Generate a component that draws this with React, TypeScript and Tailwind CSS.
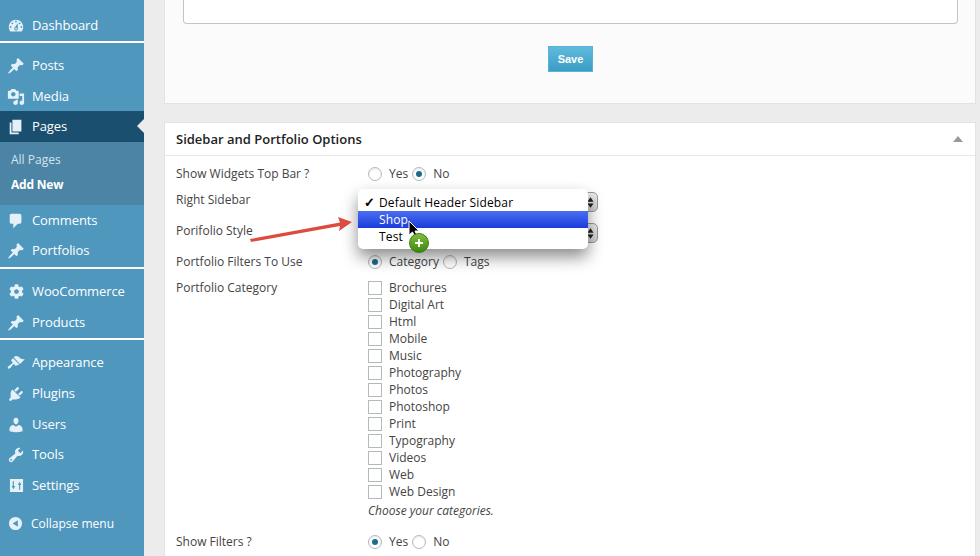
import { ReactNode } from "react"
import { FaCog } from "react-icons/fa"

const icons = {
  dashboard:
    "M3.76 16h12.48c1.1-1.37 1.76-3.11 1.76-5 0-4.42-3.58-8-8-8s-8 3.58-8 8c0 1.89.66 3.63 1.76 5zM10 4c.55 0 1 .45 1 1s-.45 1-1 1-1-.45-1-1 .45-1 1-1zM6 6c.55 0 1 .45 1 1s-.45 1-1 1-1-.45-1-1 .45-1 1-1zm8 0c.55 0 1 .45 1 1s-.45 1-1 1-1-.45-1-1 .45-1 1-1zm-5.37 5.55L12 7v6c0 1.1-.9 2-2 2s-2-.9-2-2c0-.57.24-1.08.63-1.45zM4 10c.55 0 1 .45 1 1s-.45 1-1 1-1-.45-1-1 .45-1 1-1zm12 0c.55 0 1 .45 1 1s-.45 1-1 1-1-.45-1-1 .45-1 1-1zm-5 3c0-.55-.45-1-1-1s-1 .45-1 1 .45 1 1 1 1-.45 1-1z",
  pin: "M10.44 3.02l1.82-1.82 6.36 6.35-1.83 1.82c-1.05-.68-2.48-.57-3.41.36l-.75.75c-.92.93-1.04 2.35-.35 3.41l-1.83 1.82-2.41-2.41-2.8 2.79c-.42.42-3.38 2.71-3.8 2.29s1.86-3.39 2.28-3.81l2.79-2.79L4.1 9.36l1.83-1.82c1.05.69 2.48.57 3.4-.36l.75-.75c.93-.92 1.05-2.35.36-3.41z",
  media:
    "M13 11V4c0-.55-.45-1-1-1h-1.67L9 1H5L3.67 3H2c-.55 0-1 .45-1 1v7c0 .55.45 1 1 1h10c.55 0 1-.45 1-1zM7 4.5c1.38 0 2.5 1.12 2.5 2.5S8.38 9.5 7 9.5 4.5 8.38 4.5 7 5.62 4.5 7 4.5zM14 6h5v10.5c0 1.38-1.12 2.5-2.5 2.5S14 17.88 14 16.5s1.12-2.5 2.5-2.5c.17 0 .34.02.5.05V9h-3V6zm-4 8.05V13h2v3.5c0 1.38-1.12 2.5-2.5 2.5S7 17.88 7 16.5 8.12 14 9.5 14c.17 0 .34.02.5.05z",
  pages: "M6 15V2h10v13H6zm-1 1h8v2H3V5h2v11z",
  comment: "M5 2h9c1.1 0 2 .9 2 2v7c0 1.1-.9 2-2 2h-2l-5 5v-5H5c-1.1 0-2-.9-2-2V4c0-1.1.9-2 2-2z",
  brush:
    "M14.48 11.06L7.41 3.99l1.5-1.5c.5-.56 2.3-.47 3.51.32 1.21.8 1.43 1.28 2.91 2.1 1.18.64 2.45 1.26 4.45.85zm-.71.71L6.7 4.7 4.93 6.47c-.39.39-.39 1.02 0 1.41l1.06 1.06c.39.39.39 1.03 0 1.42-.6.6-1.43 1.11-2.21 1.69-.35.26-.7.53-1.01.84C1.43 13.23.4 14.85 1.02 15.98c.5.8 2.2-.08 3.14-.98.3-.31.58-.66.84-1.01.58-.78 1.09-1.61 1.69-2.21.39-.39 1.02-.39 1.41 0l1.06 1.06c.39.39 1.02.39 1.41 0z",
  plug: "M13.11 4.36L9.87 7.6 8 5.73l3.24-3.24c.35-.34 1.05-.2 1.56.32.52.51.66 1.21.31 1.55zm-8 1.77l.91-1.12 9.01 9.01-1.19.84c-.71.71-2.63 1.16-3.82 1.16H6.14L4.9 17.26c-.59.59-1.54.59-2.12 0-.59-.58-.59-1.53 0-2.12l1.24-1.24v-3.88c0-1.13.4-3.19 1.09-3.89zm7.26 3.97l3.24-3.24c.34-.35 1.04-.21 1.55.31.52.51.66 1.21.31 1.55l-3.24 3.25z",
  user: "M10 9.25c-2.27 0-2.73-3.44-2.73-3.44C7 4.02 7.82 2 9.97 2c2.16 0 2.98 2.02 2.71 3.81 0 0-.41 3.44-2.68 3.44zm0 2.57L12.72 10c2.39 0 4.52 2.33 4.52 4.53v2.49s-3.65 1.13-7.24 1.13c-3.65 0-7.24-1.13-7.24-1.13v-2.49c0-2.25 1.94-4.48 4.47-4.48z",
  wrench:
    "M16.68 9.77c-1.34 1.34-3.3 1.67-4.95.99l-5.41 6.52c-.99.99-2.59.99-3.58 0s-.99-2.59 0-3.57l6.52-5.42c-.68-1.65-.35-3.61.99-4.95 1.28-1.28 3.12-1.62 4.72-1.06l-2.89 2.89 2.82 2.82 2.86-2.87c.53 1.58.18 3.39-1.08 4.67zM3.81 16.21c.4.39 1.04.39 1.43 0 .4-.4.4-1.04 0-1.43-.39-.4-1.03-.4-1.43 0-.39.39-.39 1.03 0 1.43z",
}

function Dash({ d }: { d: string }) {
  return (
    <svg viewBox="0 0 20 20" className="h-[18px] w-[18px]" fill="currentColor">
      <path d={d} />
    </svg>
  )
}

function SlidersIcon() {
  return (
    <svg viewBox="0 0 16 16" className="h-[15px] w-[15px]" fill="currentColor">
      <path fillRule="evenodd" d="M1 1h14v14H1zM4 3.5v5H2.8L4.7 12l1.9-3.5H5.2v-5zM10.8 12.5v-5H9.4l1.9-3.5 1.9 3.5H12v5z" />
    </svg>
  )
}

function MenuItem({ icon, label, active }: { icon: ReactNode; label: string; active?: boolean }) {
  return (
    <div className={`relative flex h-[31px] items-center text-[13px] tracking-[-0.1px] text-white ${active ? "bg-[#1b4f70]" : ""}`}>
      <span className="flex w-[32px] shrink-0 justify-center text-[#e4f1f8]">{icon}</span>
      <span>{label}</span>
      {active && (
        <span className="absolute right-0 top-[8px] border-y-[7px] border-r-[7px] border-y-transparent border-r-[#ececec]" />
      )}
    </div>
  )
}

function Sidebar() {
  return (
    <aside className="w-[144px] shrink-0 bg-[#5097be] pt-[10px]">
      <MenuItem icon={<Dash d={icons.dashboard} />} label="Dashboard" />
      <div className="mb-[7px] h-[2px] bg-white" />
      <MenuItem icon={<Dash d={icons.pin} />} label="Posts" />
      <MenuItem icon={<Dash d={icons.media} />} label="Media" />
      <div className="-mt-[1px]">
        <MenuItem icon={<Dash d={icons.pages} />} label="Pages" active />
      </div>
      <div className="flex h-[63px] flex-col bg-[#4b84a4] pl-[11px] pt-[5px] text-[12px]">
        <span className="flex h-[25px] items-center text-[#d3e4ee]">All Pages</span>
        <span className="flex h-[25px] items-center font-bold tracking-[-0.2px] text-white">Add New</span>
      </div>
      <MenuItem icon={<Dash d={icons.comment} />} label="Comments" />
      <div className="-mt-[1px]">
        <MenuItem icon={<Dash d={icons.pin} />} label="Portfolios" />
      </div>
      <div className="mb-[7px] mt-[1px] h-[2px] bg-white" />
      <MenuItem icon={<FaCog size={15} />} label="WooCommerce" />
      <MenuItem icon={<Dash d={icons.pin} />} label="Products" />
      <div className="mb-[7px] h-[2px] bg-white" />
      <MenuItem icon={<Dash d={icons.brush} />} label="Appearance" />
      <MenuItem icon={<Dash d={icons.plug} />} label="Plugins" />
      <MenuItem icon={<Dash d={icons.user} />} label="Users" />
      <div className="-mt-[1px]">
        <MenuItem icon={<Dash d={icons.wrench} />} label="Tools" />
      </div>
      <MenuItem icon={<SlidersIcon />} label="Settings" />
      <div className="mt-[7px] flex h-[31px] items-center text-[12px] text-white">
        <span className="flex w-[31px] shrink-0 justify-center text-[#e4f1f8]">
          <svg viewBox="0 0 16 16" className="h-[15px] w-[15px]" fill="currentColor">
            <path fillRule="evenodd" d="M8 1a7 7 0 1 1 0 14A7 7 0 0 1 8 1zM10.5 4.5L5 8l5.500 3.500z" />
          </svg>
        </span>
        <span>Collapse menu</span>
      </div>
    </aside>
  )
}

function Radio({ checked }: { checked?: boolean }) {
  return (
    <span className="flex h-[14px] w-[14px] shrink-0 items-center justify-center rounded-full border border-[#b4b9be] bg-white shadow-[inset_0_1px_2px_rgba(0,0,0,0.1)]">
      {checked && <span className="h-[6px] w-[6px] rounded-full bg-[#1e6a8d]" />}
    </span>
  )
}

function RadioPair({ first, second, checked }: { first: string; second: string; checked: 0 | 1 }) {
  return (
    <div className="flex items-center">
      <Radio checked={checked === 0} />
      <span className="ml-[7px] mr-[4px]">{first}</span>
      <Radio checked={checked === 1} />
      <span className="ml-[7px]">{second}</span>
    </div>
  )
}

function Row({ label, height, children }: { label: string; height: string; children?: ReactNode }) {
  return (
    <div className={`flex ${height}`}>
      <div className="w-[192px] shrink-0">{label}</div>
      <div>{children}</div>
    </div>
  )
}

function FakeSelect() {
  return (
    <div className="mt-[1px] flex h-[20px] w-[230px] items-center justify-end rounded-[5px] border border-[#9a9a9a] bg-gradient-to-b from-[#ececec] to-[#cfcfcf] pr-[3px]">
      <svg viewBox="0 0 8 14" className="h-[13px] w-[7px]" fill="#222">
        <path d="M4 1l3.500 5H.5zM4 13L.5 8h7z" />
      </svg>
    </div>
  )
}

const categories = [
  "Brochures",
  "Digital Art",
  "Html",
  "Mobile",
  "Music",
  "Photography",
  "Photos",
  "Photoshop",
  "Print",
  "Typography",
  "Videos",
  "Web",
  "Web Design",
]

function Dropdown() {
  return (
    <div className="absolute left-[193px] top-[66px] h-[60px] w-[230px] rounded-[5px] bg-white pt-[5px] text-[12px] tracking-[0.15px] text-black shadow-[0_8px_16px_rgba(0,0,0,0.45)]">
      <div className="flex h-[17px] items-center pl-[6px]">
        <span className="w-[15px] text-[13px] font-bold leading-none">✓</span>
        <span>Default Header Sidebar</span>
      </div>
      <div className="flex h-[17px] items-center bg-gradient-to-b from-[#4a6df0] to-[#1c3bdc] pl-[21px] text-white">Shop</div>
      <div className="flex h-[17px] items-center pl-[21px]">Test</div>
    </div>
  )
}

function Overlays() {
  return (
    <>
      <svg viewBox="245 212 112 34" className="absolute left-[80px] top-[89px] h-[34px] w-[112px]">
        <path d="M250 239L340 222.500 338 217 352 222 339 231 340 226 251 242z" fill="#dd4b3e" />
      </svg>
      <svg viewBox="0 0 14 20" className="absolute left-[243px] top-[97px] h-[20px] w-[14px]">
        <path d="M1 1v14l3.500-3 2.500 5 2.400-1-2.400-5H11z" fill="#000" stroke="#fff" strokeWidth="1" />
      </svg>
      <span className="absolute left-[244px] top-[110px] flex h-[20px] w-[20px] items-center justify-center rounded-full border border-[#3f7a14] bg-gradient-to-b from-[#7dc03a] to-[#3f8613]">
        <svg viewBox="0 0 10 10" className="h-[10px] w-[10px]" fill="#fff">
          <path d="M4 1h2v3h3v2H6v3H4V6H1V4h3z" />
        </svg>
      </span>
    </>
  )
}

export default function App() {
  return (
    <div className="flex h-[556px] w-[980px] overflow-hidden font-['Open_Sans',sans-serif]">
      <Sidebar />
      <main className="flex-1 bg-[#ececec] pl-[20px] pr-[4px]">
        <section className="h-[104px] border border-t-0 border-[#e3e3e3] bg-[#fbfbfb] pl-[18px] pr-[17px]">
          <div className="h-[24px] rounded-b-[4px] border border-t-0 border-[#c4c4c4] bg-white" />
          <div className="mt-[22px] flex justify-center">
            <button className="h-[26px] w-[45px] border border-[#58b3d6] bg-gradient-to-b from-[#5fbbdc] to-[#3b9cc4] font-['Liberation_Sans',sans-serif] text-[11px] font-bold text-white">
              Save
            </button>
          </div>
        </section>
        <section className="relative mt-[18px] h-[500px] border border-[#e3e3e3] bg-white text-[12px] text-[#444]">
          <header className="flex h-[33px] items-center justify-between border-b border-[#e8e8e8] pl-[11px] pr-[12px]">
            <h2 className="pt-[1px] text-[13px] font-semibold text-[#222]">Sidebar and Portfolio Options</h2>
            <span className="border-x-[5px] border-b-[6px] border-x-transparent border-b-[#999]" />
          </header>
          <div className="pl-[11px] pt-[9px] leading-[17px]">
            <Row label="Show Widgets Top Bar ?" height="h-[26px]">
              <RadioPair first="Yes" second="No" checked={1} />
            </Row>
            <Row label="Right Sidebar" height="h-[31px]">
              <FakeSelect />
            </Row>
            <Row label="Porifolio Style" height="h-[31px]">
              <FakeSelect />
            </Row>
            <Row label="Portfolio Filters To Use" height="h-[26px]">
              <RadioPair first="Category" second="Tags" checked={0} />
            </Row>
            <Row label="Portfolio Category" height="h-[254px]">
              <div className="flex flex-col">
                {categories.map((name) => (
                  <div key={name} className="flex h-[17px] items-center">
                    <span className="h-[14px] w-[14px] shrink-0 border border-[#b4b9be] bg-white" />
                    <span className="ml-[7px]">{name}</span>
                  </div>
                ))}
                <em className="mt-[2px]">Choose your categories.</em>
              </div>
            </Row>
            <Row label="Show Filters ?" height="h-[26px]">
              <RadioPair first="Yes" second="No" checked={0} />
            </Row>
          </div>
          <Dropdown />
          <Overlays />
        </section>
      </main>
    </div>
  )
}
